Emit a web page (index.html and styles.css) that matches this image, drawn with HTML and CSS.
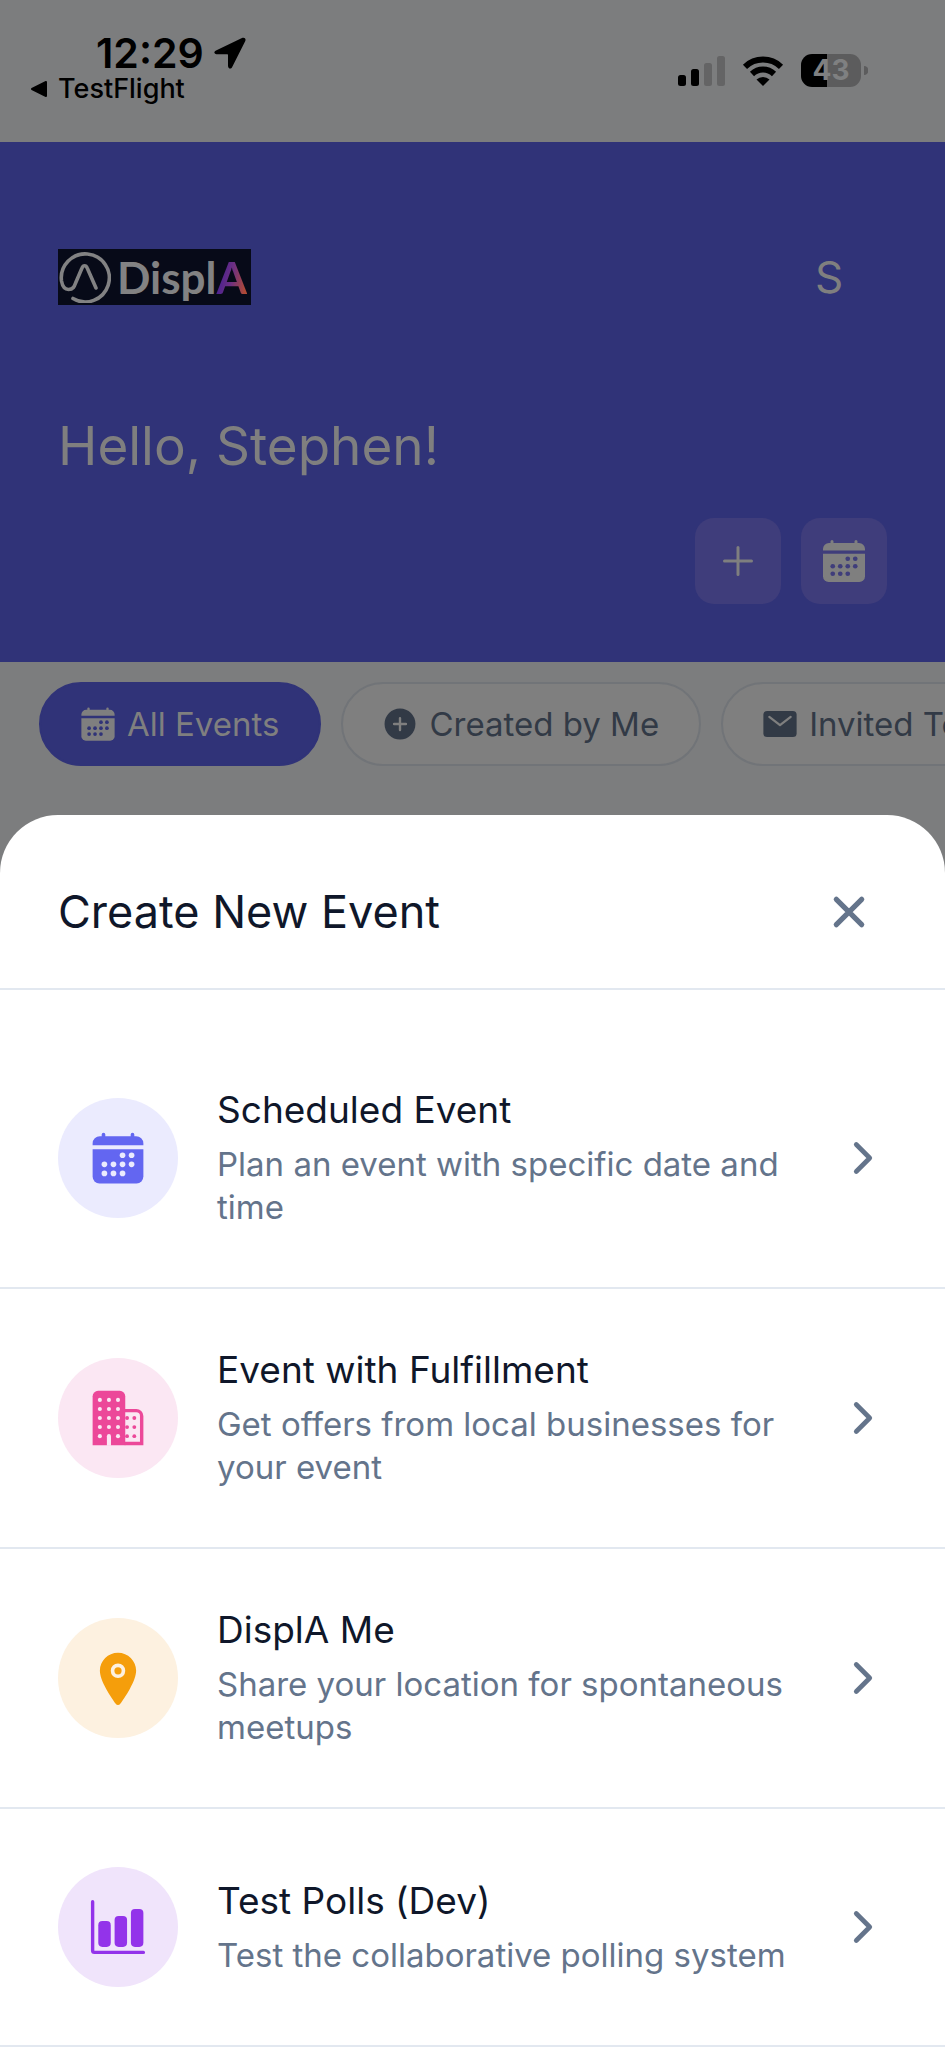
FILE: index.html
```html
<!DOCTYPE html>
<html lang="en">
<head>
<meta charset="utf-8">
<meta name="viewport" content="width=device-width, initial-scale=1">
<title>Create New Event</title>
<link rel="stylesheet" href="styles.css">
</head>
<body>
<svg class="sprite" aria-hidden="true">
  <defs>
    <mask id="cal-dots" maskUnits="userSpaceOnUse" x="0" y="0" width="512" height="512">
      <rect width="512" height="512" fill="#fff"/>
      <g fill="#000">
        <circle cx="296" cy="232" r="25"/><circle cx="376" cy="232" r="25"/>
        <circle cx="136" cy="312" r="25"/><circle cx="216" cy="312" r="25"/><circle cx="296" cy="312" r="25"/><circle cx="376" cy="312" r="25"/>
        <circle cx="136" cy="392" r="25"/><circle cx="216" cy="392" r="25"/><circle cx="296" cy="392" r="25"/>
      </g>
    </mask>
    <mask id="windows" maskUnits="userSpaceOnUse" x="0" y="0" width="512" height="512">
      <rect width="512" height="512" fill="#fff"/>
      <g fill="#000">
        <circle cx="96" cy="96" r="18"/><circle cx="176" cy="96" r="18"/><circle cx="256" cy="96" r="18"/>
        <circle cx="96" cy="176" r="18"/><circle cx="176" cy="176" r="18"/><circle cx="256" cy="176" r="18"/>
        <circle cx="96" cy="256" r="18"/><circle cx="176" cy="256" r="18"/><circle cx="256" cy="256" r="18"/>
        <circle cx="96" cy="336" r="18"/><circle cx="176" cy="336" r="18"/><circle cx="256" cy="336" r="18"/>
        <circle cx="96" cy="416" r="18"/><circle cx="256" cy="416" r="18"/>
        <path d="M158 500v-84a18 18 0 0 1 36 0v84z"/>
      </g>
    </mask>
  </defs>
  <symbol id="calendar" viewBox="0 0 512 512">
    <g fill="currentColor" mask="url(#cal-dots)">
      <path d="M480 144v-16a64 64 0 0 0-64-64h-16V48a16 16 0 0 0-32 0v16H144V48a16 16 0 0 0-32 0v16H96a64 64 0 0 0-64 64v16z"/>
      <path d="M32 178v242a60 60 0 0 0 60 60h328a60 60 0 0 0 60-60V178z"/>
    </g>
  </symbol>
  <symbol id="building" viewBox="0 0 512 512">
    <path fill="currentColor" mask="url(#windows)" d="M32 496V64a48 48 0 0 1 48-48h192a48 48 0 0 1 48 48v432z"/>
    <path fill="none" stroke="currentColor" stroke-width="30" d="M316 191h101a48 48 0 0 1 48 48v242H316"/>
    <g fill="currentColor"><circle cx="336" cy="256" r="17"/><circle cx="400" cy="256" r="17"/><circle cx="336" cy="336" r="17"/><circle cx="400" cy="336" r="17"/><circle cx="336" cy="416" r="17"/><circle cx="400" cy="416" r="17"/></g>
  </symbol>
  <symbol id="pin" viewBox="0 0 512 512">
    <path fill="currentColor" fill-rule="evenodd" d="M256 32C168 32 96 103 96 190c0 42 19 97 57 165 30 54 65 103 83 129a24 24 0 0 0 40 0c18-26 53-75 83-129 38-68 57-123 57-165 0-87-72-158-160-158zm0 224a64 64 0 1 1 0-128 64 64 0 0 1 0 128z"/>
    <circle cx="256" cy="192" r="32" fill="currentColor"/>
  </symbol>
  <symbol id="chart" viewBox="0 0 512 512">
    <path fill="none" stroke="currentColor" stroke-width="30" stroke-linecap="round" stroke-linejoin="round" d="M32 32v432a16 16 0 0 0 16 16h432"/>
    <g fill="currentColor"><rect x="82" y="204" width="110" height="228" rx="36"/><rect x="226" y="158" width="110" height="274" rx="36"/><rect x="370" y="96" width="110" height="336" rx="36"/></g>
  </symbol>
  <symbol id="chevron" viewBox="0 0 512 512">
    <path fill="none" stroke="currentColor" stroke-width="50" stroke-linecap="round" stroke-linejoin="round" d="M184 112l144 144-144 144"/>
  </symbol>
</svg>

<div class="status">
  <div class="status-left">
    <div class="clock">
      <span>12:29</span>
      <svg width="32" height="32" viewBox="0 0 32 32" aria-hidden="true"><path fill="#000" d="M28 1 2 13.500C-.5 14.800 0 17 2.500 17.200H13c.8 0 1 .3 1 1V29c.3 3 3 3.500 4.200 1L31.300 4C32.200 1.500 30.500.2 28 1z"/></svg>
    </div>
    <a class="back" href="#">
      <svg width="18" height="18" viewBox="0 0 18 18" aria-hidden="true"><path d="M2 9 16 2v14z" stroke="#000" stroke-width="2" stroke-linejoin="round"/></svg>
      TestFlight
    </a>
  </div>
  <div class="status-right">
    <svg width="47" height="30" viewBox="0 0 47 30" aria-hidden="true"><rect y="19" width="8" height="11" rx="2.500"/><rect x="13" y="13" width="8" height="17" rx="2.500"/><g fill="#646465"><rect x="26" y="7" width="8" height="23" rx="2.500"/><rect x="39" width="8" height="30" rx="2.500"/></g></svg>
    <svg width="42" height="30" viewBox="0 0 42 30" aria-hidden="true"><path fill="none" stroke="#000" stroke-width="6" d="M3 10.800a26 26 0 0 1 36 0M10 18a16 16 0 0 1 22 0"/><path d="M21 30l-6.500-6.500a9.500 9.500 0 0 1 13 0z"/></svg>
    <div class="battery"><span class="battery-level">43</span><svg width="4" height="9" viewBox="0 0 4 9" aria-hidden="true"><path fill="#5c5c5d" d="M0 0a4.500 4.500 0 0 1 0 9z"/></svg></div>
  </div>
</div>

<header class="hero">
  <div class="hero-top">
    <div class="logo">
      <svg width="52" height="52" viewBox="0 0 52 52" aria-hidden="true"><path fill="none" stroke="#828283" stroke-width="3.600" stroke-linecap="round" stroke-linejoin="round" d="M14 47.500A24 24 0 1 0 2.500 30c1 5.500 3 8.500 7 8.500 5 0 6-3.500 7.500-7.500l6-14c1.200-3 4-3 5.200 0L37 37"/></svg>
      <span class="wordmark">Displ<span class="wordmark-a">A</span></span>
    </div>
    <button class="avatar" aria-label="Profile">S</button>
  </div>
  <h1 class="greeting">Hello, Stephen!</h1>
  <div class="actions">
    <button class="action" aria-label="Add"><svg width="48" height="48" viewBox="0 0 512 512"><path fill="none" stroke="currentColor" stroke-width="32" stroke-linecap="round" d="M256 112v288M400 256H112"/></svg></button>
    <button class="action" aria-label="Calendar"><svg width="48" height="48"><use href="#calendar"/></svg></button>
  </div>
</header>

<nav class="tabs" aria-label="Event filters">
  <button class="tab active"><svg width="38" height="38" aria-hidden="true"><use href="#calendar"/></svg>All Events</button>
  <button class="tab"><svg width="38" height="38" viewBox="0 0 512 512" aria-hidden="true"><circle cx="256" cy="256" r="208" fill="currentColor"/><path stroke="#7f7f7f" stroke-width="32" stroke-linecap="round" d="M256 176v160M336 256H176"/></svg>Created by Me</button>
  <button class="tab"><svg width="38" height="38" viewBox="0 0 512 512" aria-hidden="true"><rect x="32" y="80" width="448" height="352" rx="52" fill="currentColor"/><path fill="none" stroke="#7f7f7f" stroke-width="30" stroke-linecap="round" stroke-linejoin="round" d="M112 160l144 112 144-112"/></svg>Invited To</button>
</nav>

<section class="sheet" role="dialog" aria-labelledby="sheet-title">
  <div class="sheet-head">
    <h2 id="sheet-title">Create New Event</h2>
    <button class="close" aria-label="Close"><svg width="58" height="58" viewBox="0 0 512 512"><path stroke="currentColor" stroke-width="46" stroke-linecap="round" d="M144 144l224 224M368 144L144 368"/></svg></button>
  </div>
  <div class="options">
    <button class="option">
      <span class="badge indigo"><svg width="58" height="58" aria-hidden="true"><use href="#calendar"/></svg></span>
      <span class="copy"><span class="name">Scheduled Event</span><span class="desc">Plan an event with specific date and time</span></span>
      <svg class="chevron" width="48" height="48" aria-hidden="true"><use href="#chevron"/></svg>
    </button>
    <button class="option">
      <span class="badge pink"><svg width="58" height="58" aria-hidden="true"><use href="#building"/></svg></span>
      <span class="copy"><span class="name">Event with Fulfillment</span><span class="desc">Get offers from local businesses for your event</span></span>
      <svg class="chevron" width="48" height="48" aria-hidden="true"><use href="#chevron"/></svg>
    </button>
    <button class="option">
      <span class="badge amber"><svg width="58" height="58" aria-hidden="true"><use href="#pin"/></svg></span>
      <span class="copy"><span class="name">DisplA Me</span><span class="desc">Share your location for spontaneous meetups</span></span>
      <svg class="chevron" width="48" height="48" aria-hidden="true"><use href="#chevron"/></svg>
    </button>
    <button class="option">
      <span class="badge purple"><svg width="58" height="58" aria-hidden="true"><use href="#chart"/></svg></span>
      <span class="copy"><span class="name">Test Polls (Dev)</span><span class="desc">Test the collaborative polling system</span></span>
      <svg class="chevron" width="48" height="48" aria-hidden="true"><use href="#chevron"/></svg>
    </button>
  </div>
</section>
</body>
</html>
```

FILE: styles.css
```css
* { box-sizing: border-box; }

body {
  margin: 0;
  min-height: 100vh;
  display: flex;
  flex-direction: column;
  background: #7c7d7e;
  font-family: Inter, "Liberation Sans", sans-serif;
  color: #0f172a;
  overflow-x: hidden;
}

button {
  font: inherit;
  color: inherit;
  border: 0;
  background: none;
  padding: 0;
  cursor: pointer;
}

svg { display: block; flex: none; }
.sprite { position: absolute; width: 0; height: 0; }

/* Status bar */
.status {
  height: 142px;
  display: flex;
  justify-content: space-between;
  padding: 32px 77px 0 30px;
  color: #000;
}
.status-left { display: flex; flex-direction: column; }
.clock {
  display: flex;
  align-items: center;
  gap: 10px;
  padding-left: 66px;
  font-size: 41px;
  line-height: 42px;
  font-weight: 600;
}
.back {
  display: flex;
  align-items: center;
  gap: 10px;
  font-size: 27px;
  line-height: 30px;
  font-weight: 500;
  color: inherit;
  text-decoration: none;
}
.status-right { display: flex; align-items: center; gap: 17px; height: 76px; }
.status-right { align-self: flex-start; height: 77px; }
.status .status-right { height: auto; padding-top: 22px; }
.battery { display: flex; align-items: center; gap: 3px; }
.battery-level {
  width: 60px;
  height: 33px;
  border-radius: 11px;
  background: linear-gradient(to right, #000 43%, #5c5c5d 43%);
  color: #7f8081;
  font-size: 28px;
  line-height: 33px;
  font-weight: 700;
  text-align: center;
}

/* Hero */
.hero {
  display: flex;
  flex-direction: column;
  padding: 77px 58px 58px;
  background: #303378;
  color: #7f7f7f;
}
.hero-top { display: flex; justify-content: space-between; align-items: center; }
.logo {
  display: flex;
  align-items: center;
  gap: 6px;
  height: 56px;
  padding: 0 4px 0 1px;
  background: #070a18;
}
.wordmark {
  font-family: Lato, sans-serif;
  font-weight: 700;
  font-size: 44px;
  line-height: 50px;
  color: #828283;
}
.wordmark-a {
  background: linear-gradient(100deg, #4c2290 20%, #6c2f83 50%, #b04a35 90%);
  -webkit-background-clip: text;
  background-clip: text;
  color: transparent;
}
.avatar { width: 116px; height: 116px; font-size: 44px; }
.greeting {
  margin: 77px 0 38px;
  font-size: 53px;
  line-height: 68px;
  font-weight: 400;
}
.actions { display: flex; justify-content: flex-end; gap: 20px; }
.action {
  width: 86px;
  height: 86px;
  display: grid;
  place-items: center;
  border-radius: 19px;
  background: #3f3d7b;
}

/* Filter tabs */
.tabs { display: flex; gap: 20px; padding: 20px 0 49px 39px; overflow: hidden; }
.tab {
  flex: none;
  display: flex;
  align-items: center;
  gap: 10px;
  height: 84px;
  padding: 0 40px 0 38px;
  border: 2px solid #717478;
  border-radius: 42px;
  background: #7f7f7f;
  color: #323a46;
  font-size: 33px;
  line-height: 42px;
  white-space: nowrap;
}
.tab.active { background: #303378; border-color: #303378; color: #7f7f7f; }

/* Bottom sheet */
.sheet {
  flex: 1;
  background: #fff;
  border-radius: 58px 58px 0 0;
}
.sheet-head {
  display: flex;
  align-items: center;
  justify-content: space-between;
  padding: 58px 58px 38px;
  border-bottom: 2px solid #e2e8f0;
}
.sheet-head h2 { margin: 0; font-size: 45px; line-height: 58px; font-weight: 400; }
.close {
  width: 77px;
  height: 77px;
  display: grid;
  place-items: center;
  color: #64748b;
}
.options { padding-top: 39px; }
.option {
  width: 100%;
  display: flex;
  align-items: center;
  padding: 58px;
  border-bottom: 2px solid #e2e8f0;
  text-align: left;
}
.badge {
  flex: none;
  width: 120px;
  height: 120px;
  display: grid;
  place-items: center;
  border-radius: 50%;
}
.indigo { background: #ebebfe; color: #6366f1; }
.pink { background: #fbe7f3; color: #ec4899; }
.amber { background: #fdf1e0; color: #f59e0b; }
.purple { background: #f0e4fb; color: #9333ea; }
.copy { flex: 1; display: flex; flex-direction: column; gap: 10px; padding: 0 39px; }
.name { font-size: 37px; line-height: 46px; }
.desc { font-size: 33px; line-height: 43px; color: #64748b; }
.chevron { color: #64748b; }
```
